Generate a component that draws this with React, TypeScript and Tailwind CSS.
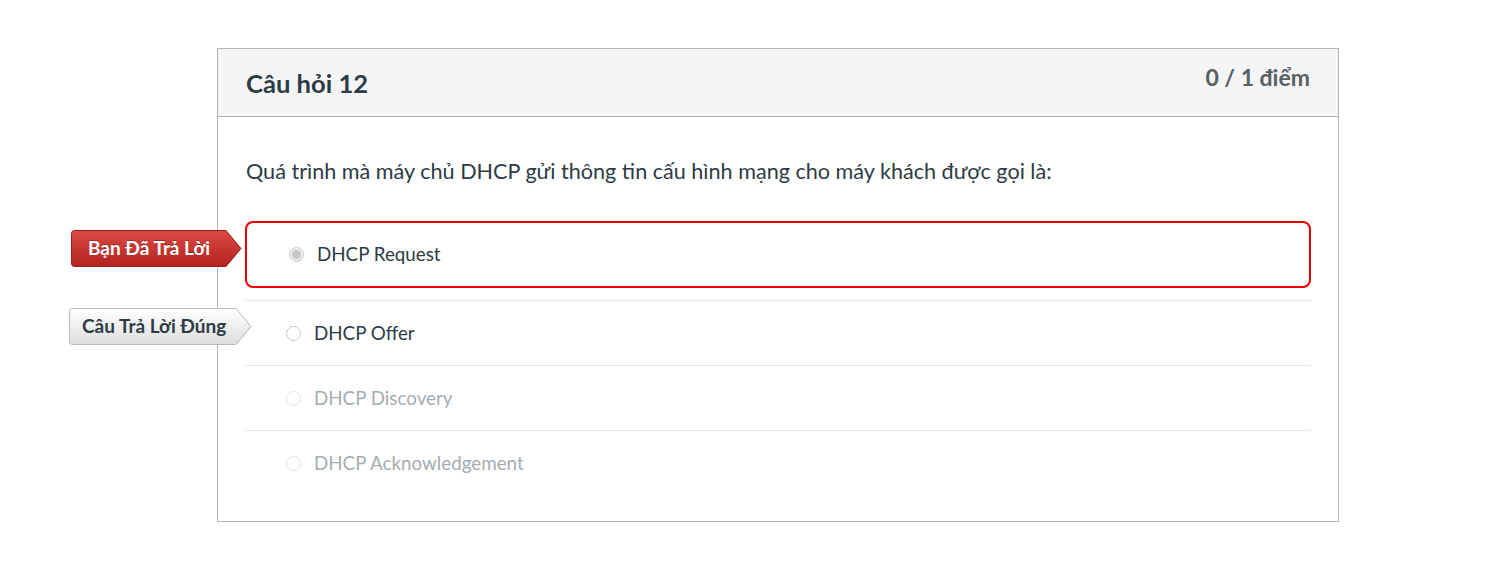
import React from "react"

type Answer = { text: string; state: "selected" | "correct" | "muted" }

const answers: Answer[] = [
  { text: "DHCP Request", state: "selected" },
  { text: "DHCP Offer", state: "correct" },
  { text: "DHCP Discovery", state: "muted" },
  { text: "DHCP Acknowledgement", state: "muted" },
]

const Flag = ({ label, tone, width, pad }: { label: string; tone: "red" | "gray"; width: number; pad: string }) => {
  const h = 36
  const tip = 15
  const red = tone === "red"
  const id = red ? "flagRed" : "flagGray"
  return (
    <div className="relative h-[37px]" style={{ width }}>
      <svg className="absolute inset-0" width={width} height={h + 1} viewBox={`0 0 ${width} ${h + 1}`}>
        <defs>
          <linearGradient id={id} x1="0" y1="0" x2="0" y2="1">
            <stop offset="0" stopColor={red ? "#dc4a44" : "#ffffff"} />
            <stop offset="1" stopColor={red ? "#b3231f" : "#dedede"} />
          </linearGradient>
        </defs>
        <path
          d={`M3.5 0.5 H${width - tip - 1} L${width - 1} ${h / 2 + 0.5} L${width - tip - 1} ${h + 0.5} H3.5 Q0.5 ${h + 0.5} 0.5 ${h - 2.5} V3.5 Q0.5 0.5 3.5 0.5 Z`}
          fill={`url(#${id})`}
          stroke={red ? "#9a1f1b" : "#b8b8b8"}
          strokeWidth="1"
        />
      </svg>
      <span
        className={`absolute left-0 top-0 flex h-full items-center text-[19px] font-bold ${pad} ${
          red ? "text-white [text-shadow:0_-1px_0_rgba(0,0,0,0.3)]" : "text-[#2d3b45]"
        }`}
      >
        {label}
      </span>
    </div>
  )
}

const Radio = ({ state }: { state: Answer["state"] }) => {
  if (state === "selected")
    return (
      <span className="flex h-[15px] w-[15px] items-center justify-center rounded-full border border-[#d0d0d0] bg-[#ededed]">
        <span className="h-[9px] w-[9px] rounded-full bg-[#c6c6c6]" />
      </span>
    )
  return (
    <span
      className={`h-[15px] w-[15px] rounded-full border bg-white ${
        state === "correct" ? "border-[#c4c4c4]" : "border-[#e2e2e2]"
      }`}
    />
  )
}

export default function App() {
  return (
    <div className="min-h-[561px] bg-white pt-[48px] [font-family:Lato,'Noto_Sans',sans-serif]">
      <div className="relative ml-[217px] w-[1122px] border border-[#b5b5b5] bg-white">
        <div className="flex h-[68px] justify-between border-b border-[#b5b5b5] bg-[#f5f5f5] px-[28px]">
          <h2 className="pt-[15px] text-[25.6px] font-bold text-[#2d3b45]">Câu hỏi 12</h2>
          <div className="pt-[11px] text-[23px] font-bold text-[#585f63]">0 / 1 điểm</div>
        </div>

        <div className="px-[27px] pt-[40px] pb-[26px]">
          <p className="mb-[36px] ml-[1px] text-[21.6px] leading-[28px] text-[#2d3b45]">
            Quá trình mà máy chủ DHCP gửi thông tin cấu hình mạng cho máy khách được gọi là:
          </p>

          {answers.map((a, i) =>
            a.state === "selected" ? (
              <div
                key={i}
                className="mb-[12px] flex h-[67px] items-center gap-[13px] rounded-[8px] border-2 border-[#ee0000] pl-[42px]"
              >
                <Radio state={a.state} />
                <span className="text-[18.8px] text-[#2d3b45]">{a.text}</span>
              </div>
            ) : (
              <div key={i} className="flex h-[65px] items-center gap-[13px] border-t border-[#e6e6e6] pl-[41px]">
                <Radio state={a.state} />
                <span className={`text-[18.8px] ${a.state === "correct" ? "text-[#2d3b45]" : "text-[#a5acb0]"}`}>
                  {a.text}
                </span>
              </div>
            )
          )}
        </div>

        <div className="absolute left-[-147px] top-[181px]">
          <Flag label="Bạn Đã Trả Lời" tone="red" width={171} pad="pl-[17px]" />
        </div>
        <div className="absolute left-[-149px] top-[259px]">
          <Flag label="Câu Trả Lời Đúng" tone="gray" width={183} pad="pl-[13px]" />
        </div>
      </div>
    </div>
  )
}
